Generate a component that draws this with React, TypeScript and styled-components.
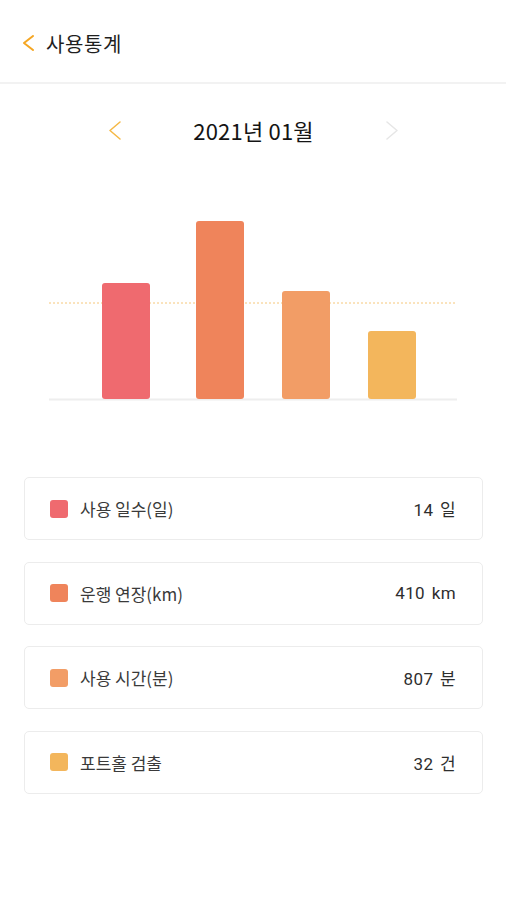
import React from 'react';
import styled, {createGlobalStyle} from 'styled-components';

const GlobalStyle = createGlobalStyle`
  body {
    margin: 0;
    background: #fff;
    font-family: "Noto Sans CJK KR", "Noto Sans", sans-serif;
    color: #333;
  }
`;

const Page = styled.div`
  width: 506px;
  min-height: 900px;
  background: #fff;
`;

const Header = styled.header`
  height: 84px;
  box-sizing: border-box;
  padding: 4px 0 0 23px;
  display: flex;
  align-items: center;
  gap: 12px;
  border-bottom: 2px solid #f2f2f2;
`;

const Title = styled.h1`
  margin: 0;
  font-size: 20px;
  font-weight: 400;
  color: #1f1f1f;
  letter-spacing: 0.6px;
`;

const MonthNav = styled.div`
  height: 92px;
  display: flex;
  align-items: center;
  justify-content: space-between;
  padding: 0 107px 0 108px;
`;

const MonthLabel = styled.div`
  font-size: 22px;
  font-weight: 400;
  color: #141414;
  letter-spacing: 0.2px;
`;

const IconButton = styled.span`
  display: flex;
  align-items: center;
  justify-content: center;
  width: 14px;
`;

const ChartWrap = styled.div`
  height: 240px;
`;

const StatList = styled.ul`
  list-style: none;
  margin: 0;
  padding: 61px 23px 0 24px;
  display: flex;
  flex-direction: column;
  gap: 21.5px;
`;

const StatCard = styled.li`
  height: 63px;
  box-sizing: border-box;
  border: 1px solid #ececec;
  border-radius: 5px;
  display: flex;
  align-items: center;
  padding: 0 26px 0 25px;
`;

const Swatch = styled.span<{ $color: string }>`
  width: 18px;
  height: 18px;
  border-radius: 3px;
  background: ${p => p.$color};
  margin-right: 12px;
  flex-shrink: 0;
`;

const StatLabel = styled.span`
  flex: 1;
  font-size: 17px;
  color: #3a3a3a;
`;

const StatValue = styled.span`
  font-family: Roboto, "Noto Sans CJK KR", sans-serif;
  font-size: 17px;
  letter-spacing: 0.4px;
  word-spacing: 2px;
  color: #2e2e2e;
`;

type ChevronProps = { dir: 'left' | 'right'; color: string; w: number; h: number; stroke: number };

const Chevron: React.FC<ChevronProps> = ({dir, color, w, h, stroke}) => (
  <svg width={w} height={h} viewBox={`0 0 ${w} ${h}`} fill="none">
    {dir === 'left'
      ? <polyline points={`${w - 1},1 1,${h / 2} ${w - 1},${h - 1}`} stroke={color} strokeWidth={stroke} strokeLinecap="round" strokeLinejoin="round"/>
      : <polyline points={`1,1 ${w - 1},${h / 2} 1,${h - 1}`} stroke={color} strokeWidth={stroke} strokeLinecap="round" strokeLinejoin="round"/>}
  </svg>
);

const stats = [
  {label: '사용 일수(일)', value: '14 일', color: '#ef6a6f', x: 102, top: 283},
  {label: '운행 연장(km)', value: '410 km', color: '#ef845b', x: 196, top: 221},
  {label: '사용 시간(분)', value: '807 분', color: '#f29d66', x: 282, top: 291},
  {label: '포트홀 검출', value: '32 건', color: '#f3b65c', x: 368, top: 331},
];

// chart svg starts at page y=176
const OFFSET = 176;
const BASE = 399 - OFFSET;

const BarChart: React.FC = () => (
  <svg width={506} height={240} viewBox="0 0 506 240">
    <line x1={49} y1={BASE + 0.5} x2={457} y2={BASE + 0.5} stroke="#eeeeee" strokeWidth={2}/>
    <line x1={49} y1={303 - OFFSET} x2={457} y2={303 - OFFSET} stroke="#f6c77a" strokeWidth={1} strokeDasharray="2 2"/>
    {stats.map(s => (
      <rect key={s.label} x={s.x} y={s.top - OFFSET} width={48} height={399 - s.top} rx={3} fill={s.color}/>
    ))}
  </svg>
);

export default function App() {
  return (
    <Page>
      <GlobalStyle/>
      <Header>
        <Chevron dir="left" color="#f5a623" w={11} h={16} stroke={2}/>
        <Title>사용통계</Title>
      </Header>

      <MonthNav>
        <IconButton><Chevron dir="left" color="#f5b845" w={12} h={19} stroke={1.5}/></IconButton>
        <MonthLabel>2021년 01월</MonthLabel>
        <IconButton><Chevron dir="right" color="#e6e6e6" w={12} h={19} stroke={1.5}/></IconButton>
      </MonthNav>

      <ChartWrap>
        <BarChart/>
      </ChartWrap>

      <StatList>
        {stats.map(s => (
          <StatCard key={s.label}>
            <Swatch $color={s.color}/>
            <StatLabel>{s.label}</StatLabel>
            <StatValue>{s.value}</StatValue>
          </StatCard>
        ))}
      </StatList>
    </Page>
  );
}
